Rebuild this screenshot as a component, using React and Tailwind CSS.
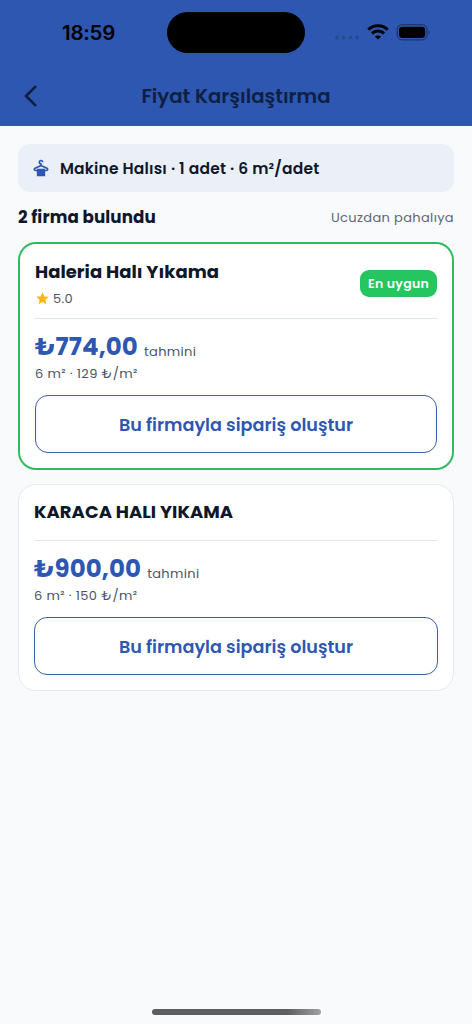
import { MdDryCleaning, MdStar } from "react-icons/md";

const firms = [
  {
    name: "Haleria Halı Yıkama",
    rating: "5.0",
    price: "₺774,00",
    detail: "6 m² · 129 ₺/m²",
    best: true,
  },
  {
    name: "KARACA HALI YIKAMA",
    price: "₺900,00",
    detail: "6 m² · 150 ₺/m²",
    best: false,
  },
];

function StatusBar() {
  return (
    <div className="flex h-[65px] items-center text-black">
      <span className="w-[167px] pl-[62px] font-[Inter] text-[20.5px] leading-6 font-semibold tracking-[-0.25px]">
        18:59
      </span>
      <div className="h-[41px] w-[138px] rounded-full bg-black" />
      <div className="ml-[30px] flex items-center">
        <svg width="25" height="20" viewBox="0 0 25 20" fill="#274a91">
          <circle cx="2" cy="14.5" r="1.9" />
          <circle cx="8.7" cy="14.5" r="1.9" />
          <circle cx="15.4" cy="14.5" r="1.9" />
          <circle cx="22.1" cy="14.5" r="1.9" />
        </svg>
        <svg className="mb-[2px] ml-[7px]" width="22" height="16" viewBox="0 0 22 16" fill="none" stroke="#000" strokeWidth="3">
          <path d="M1.3 5.6C6.7 0.5 15.3 0.5 20.7 5.6" />
          <path d="M4.9 9.4C8.3 6.2 13.7 6.2 17.1 9.4" />
          <path d="M11 15.6L7.9 12.5C9.6 11 12.4 11 14.1 12.5Z" fill="#000" stroke="none" />
        </svg>
        <svg className="mb-px ml-[7px]" width="35" height="17" viewBox="0 0 35 17">
          <rect x="1.2" y="0.7" width="29.8" height="15.2" rx="5" fill="none" stroke="#1b3771" strokeWidth="1.2" />
          <rect x="3" y="2.7" width="26.2" height="11.2" rx="3.4" fill="#000" />
          <path d="M32.4 6c1.8.8 1.8 4 0 4.8z" fill="#1b3771" />
        </svg>
      </div>
    </div>
  );
}

function FirmCard({ firm }) {
  return (
    <div
      className={
        firm.best
          ? "h-[228px] rounded-[18px] border-2 border-[#2dbd60] bg-white px-[15px]"
          : "h-[207px] rounded-[18px] border border-[#e6eaf0] bg-white px-[15px]"
      }
    >
      <div
        className={
          firm.best
            ? "flex h-[75px] items-start justify-between border-b border-[#e2e8f0] pt-[14px]"
            : "flex h-[56px] items-center border-b border-[#e2e8f0] pb-[2px]"
        }
      >
        <div>
          <h2 className="text-[18px] leading-[27px] font-bold tracking-[0.02px] whitespace-nowrap text-[#0f172a]">
            {firm.name}
          </h2>
          {firm.rating && (
            <div className="flex h-[27px] items-center text-[13px] tracking-[0.3px] text-[#4b5565]">
              <MdStar className="mr-[3px] h-[15px] w-[15px] text-[#fdb40d]" />
              <span className="pt-px">{firm.rating}</span>
            </div>
          )}
        </div>
        {firm.best && (
          <span className="mt-[12px] flex h-[27px] w-[77px] items-center justify-center rounded-[9px] bg-[#25c55f] pt-px text-[12.5px] font-semibold tracking-[0.3px] text-white">
            En uygun
          </span>
        )}
      </div>

      <div className="flex h-[39px] items-baseline pt-[10px] whitespace-nowrap">
        <span className="text-[24.5px] leading-[36px] font-bold tracking-[0.1px] text-[#2d57b1]">
          {firm.price}
        </span>
        <span className="relative top-px ml-[6px] text-[13px] tracking-[0.35px] text-[#4b5565]">
          tahmini
        </span>
      </div>
      <p className="mt-[4px] h-[22px] text-[13px] leading-[24px] tracking-[0.38px] whitespace-nowrap text-[#4b5565]">
        {firm.detail}
      </p>
      <button className="mt-[11px] flex h-[58px] w-full items-center justify-center rounded-[13px] border border-[#3b5ead] pt-[2px] text-[17.6px] font-semibold text-[#2d57b1]">
        Bu firmayla sipariş oluştur
      </button>
    </div>
  );
}

export default function App() {
  return (
    <div className="flex h-[1024px] flex-col bg-[#f9fafc] font-['Poppins','Inter',sans-serif]">
      <header className="h-[126px] bg-[#2d57b1]">
        <StatusBar />
        <div className="flex h-[61px] items-center">
          <button className="flex w-[60px] pl-[23px]">
            <svg width="16" height="22" viewBox="0 0 16 22" fill="none" stroke="#0f1f44" strokeWidth="2.7" strokeLinecap="round" strokeLinejoin="round">
              <path d="M12.2 1.9L3 11L12.2 20.1" />
            </svg>
          </button>
          <h1 className="flex-1 pt-[2px] pr-[60px] text-center text-[19.7px] font-semibold text-[#0f1f44]">
            Fiyat Karşılaştırma
          </h1>
        </div>
      </header>

      <main className="flex flex-1 flex-col px-[18px] pt-[18px]">
        <div className="flex h-[48px] items-center rounded-[12px] bg-[#eaeff8] pl-[13px] text-[#0f172a]">
          <MdDryCleaning className="mr-[9px] h-[20px] w-[20px] text-[#2d57b1]" />
          <span className="pt-px text-[15.5px] font-semibold tracking-[0.18px]">
            Makine Halısı · 1 adet · 6 m²/adet
          </span>
        </div>
        <div className="flex h-[50px] items-center justify-between pt-[2px]">
          <span className="text-[16.7px] font-bold tracking-[0.1px] text-[#0f172a]">
            2 firma bulundu
          </span>
          <span className="text-[13px] tracking-[0.35px] text-[#5c6675]">Ucuzdan pahalıya</span>
        </div>
        <div className="flex flex-col gap-[14px]">
          {firms.map((firm) => (
            <FirmCard key={firm.name} firm={firm} />
          ))}
        </div>
      </main>

      <div className="mx-auto mb-[9px] h-[6px] w-[169px] rounded-full bg-gradient-to-r from-[#5c5e60] from-80% to-[#a0a2a4]" />
    </div>
  );
}
